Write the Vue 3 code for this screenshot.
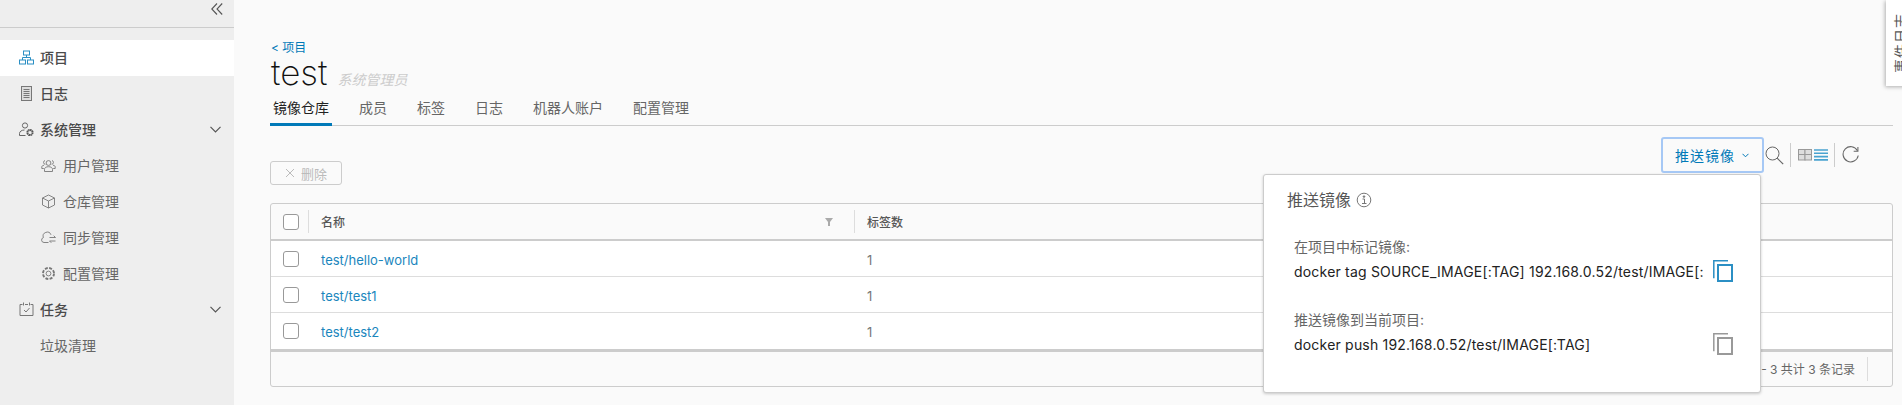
<script setup>
const subItems = [
  { label: '用户管理', icon: 'users' },
  { label: '仓库管理', icon: 'box' },
  { label: '同步管理', icon: 'cloud' },
  { label: '配置管理', icon: 'gear' },
]
const tabs = ['镜像仓库', '成员', '标签', '日志', '机器人账户', '配置管理']
const rows = ['test/hello-world', 'test/test1', 'test/test2']
</script>

<template>
  <div class="page">
    <aside class="side">
      <div class="collapse">
        <svg width="12" height="12" viewBox="0 0 12 12" fill="none" stroke="#555" stroke-width="1.100"><path d="M6 .5 .8 6 6 11.500M11.200 .5 6 6l5.200 5.500"/></svg>
      </div>
      <nav class="nav">
        <a class="item active">
          <svg class="ico" viewBox="0 0 15 15" fill="none" stroke="#2b8fc4" stroke-width="1"><rect x="4.500" y="1" width="6" height="4"/><rect x=".5" y="10" width="6" height="4"/><rect x="8.500" y="10" width="6" height="4"/><path d="M7.500 5v2.500M3.500 10V7.500h8V10"/></svg>
          <span class="top-label">项目</span>
        </a>
        <a class="item">
          <svg class="ico" viewBox="0 0 15 15" fill="none" stroke="#777" stroke-width="1"><rect x="2.500" y=".5" width="10" height="14" fill="#ddd"/><path d="M4.500 3.500h6M4.500 5.500h6M4.500 7.500h6M4.500 9.500h6M4.500 11.500h6"/></svg>
          <span class="top-label">日志</span>
        </a>
        <a class="item">
          <svg class="ico" viewBox="0 0 15 15" fill="none" stroke="#666" stroke-width="1"><circle cx="6" cy="3.500" r="2.600"/><path d="M.5 13.500v-2c0-2 2.200-3.500 5-3.500"/><path d="M.5 13.500h6"/><circle cx="11" cy="10.500" r="2.600" stroke-width="2" stroke="#555" stroke-dasharray="1.600 .4"/></svg>
          <span class="top-label">系统管理</span>
          <svg class="chev" width="11" height="7" viewBox="0 0 11 7" fill="none" stroke="#555" stroke-width="1.200"><path d="M.5 .8 5.500 5.800l5-5"/></svg>
        </a>
        <a v-for="s in subItems" :key="s.label" class="item sub">
          <svg class="ico sub-ico" viewBox="0 0 15 15" fill="none" stroke="#777" stroke-width=".9">
            <template v-if="s.icon === 'users'"><circle cx="7.500" cy="5" r="2.400"/><path d="M3.500 13.500v-2.200c0-1.600 1.600-2.600 4-2.600s4 1 4 2.600v2.200z"/><path d="M4.300 6.400A2 2 0 0 1 4 2.500M10.700 6.400A2 2 0 0 0 11 2.500M2.800 10.500H.8V9c0-1 .8-1.600 2.200-1.700M12.200 10.500h2V9c0-1-.8-1.600-2.200-1.700"/></template>
            <template v-else-if="s.icon === 'box'"><path d="M7.500 1 13.500 4v7l-6 3-6-3V4zM1.500 4l6 3 6-3M7.500 7v7"/></template>
            <template v-else-if="s.icon === 'cloud'"><path d="M7.500 12.500H3a2.500 2.500 0 0 1-.6-4.900A4 4 0 0 1 10 4.800"/><path d="M8.500 7.500h6m-1.800-1.800 1.800 1.800M14.500 11h-6m1.800 1.800L8.500 11"/></template>
            <template v-else><circle cx="7.500" cy="7.500" r="2.400"/><circle cx="7.500" cy="7.500" r="5.500" stroke-width="1.900" stroke-dasharray="2.900 1.420"/></template>
          </svg>
          <span>{{ s.label }}</span>
        </a>
        <a class="item">
          <svg class="ico" viewBox="0 0 15 15" fill="none" stroke="#777" stroke-width="1"><path d="M3.500 2.500H1v11h13v-11h-2.500M6 2.500h3M4.500 .5v3M10.500 .5v3"/><path d="m5 8 2 2 3.500-4"/></svg>
          <span class="top-label">任务</span>
          <svg class="chev" width="11" height="7" viewBox="0 0 11 7" fill="none" stroke="#555" stroke-width="1.200"><path d="M.5 .8 5.500 5.800l5-5"/></svg>
        </a>
        <a class="item leaf"><span>垃圾清理</span></a>
      </nav>
    </aside>

    <main class="main">
      <div class="crumb">&lt; 项目</div>
      <div class="title-row">
        <h1 class="title">test</h1>
        <span class="role">系统管理员</span>
      </div>
      <div class="tabs">
        <a v-for="(t, i) in tabs" :key="t" class="tab" :class="{ on: i === 0 }">{{ t }}</a>
      </div>

      <div class="toolbar">
        <button class="del">
          <svg width="10" height="10" viewBox="0 0 10 10" stroke="#bbb" stroke-width="1"><path d="m1 1 8 8M9 1 1 9"/></svg>
          删除
        </button>
        <div class="actions">
          <button class="push">推送镜像
            <svg width="7" height="5" viewBox="0 0 7 5" fill="none" stroke="#0079b8" stroke-width="1"><path d="m.5 .8 3 3 3-3"/></svg>
          </button>
          <svg class="search" width="19" height="19" viewBox="0 0 19 19" fill="none" stroke="#666" stroke-width="1"><circle cx="7.500" cy="7.500" r="6.500"/><path d="m12.200 12.200 6 6" stroke-width="1.200"/></svg>
          <span class="bar"></span>
          <svg class="view" width="30" height="12" viewBox="0 0 30 12">
            <g fill="#ddd" stroke="#999" stroke-width="1"><rect x=".5" y=".5" width="6.500" height="5"/><rect x="7" y=".5" width="6.500" height="5"/><rect x=".5" y="5.500" width="6.500" height="5.500"/><rect x="7" y="5.500" width="6.500" height="5.500"/></g>
            <path d="M16 1h14M16 4.300h14M16 7.600h14M16 10.900h14" stroke="#49a3d0" stroke-width="1.600"/>
          </svg>
          <span class="bar"></span>
          <svg class="refresh" width="17" height="18" viewBox="0 0 16 17" fill="none" stroke="#666" stroke-width="1"><path d="M14.600 4.500A7.200 7.200 0 1 0 15.300 9"/><path d="M15 1v4h-4"/></svg>
        </div>
      </div>

      <section class="table">
        <div class="row head">
          <div class="c-check"><span class="box"></span></div>
          <div class="c-name head-name">名称
            <svg class="filter" width="8" height="8" viewBox="0 0 8 8" fill="#aaa"><path d="M0 0h8L5 4v4H3V4z"/></svg>
          </div>
          <div class="c-rest">标签数</div>
        </div>
        <div v-for="r in rows" :key="r" class="row body">
          <div class="c-check plain"><span class="box"></span></div>
          <div class="c-name plain"><a class="link">{{ r }}</a></div>
          <div class="c-rest plain">1</div>
        </div>
        <div class="foot">
          <span>1 - 3 共计 3 条记录</span>
          <span class="foot-bar"></span>
        </div>
      </section>
    </main>

    <div class="pop">
      <div class="pop-title">推送镜像
        <svg width="16" height="16" viewBox="0 0 16 16" fill="none" stroke="#777" stroke-width="1"><circle cx="8" cy="8" r="6.800"/><path d="M6.500 7h2v4.500M6 11.500h4.500" /><circle cx="8" cy="4.600" r=".8" fill="#777"/></svg>
      </div>
      <div class="cmd first">
        <div class="cmd-label">在项目中标记镜像:</div>
        <div class="cmd-line"><span class="cmd-text">docker tag SOURCE_IMAGE[:TAG] 192.168.0.52/test/IMAGE[:TAG]</span>
          <svg class="copy" width="20" height="22" viewBox="0 0 20 22" fill="none" stroke="#2b8fc4"><path d="M15 .8H.8v17.500" stroke-width="1.500"/><rect x="5" y="5" width="14" height="16" stroke-width="2"/></svg>
        </div>
      </div>
      <div class="cmd second">
        <div class="cmd-label">推送镜像到当前项目:</div>
        <div class="cmd-line"><span class="cmd-text">docker push 192.168.0.52/test/IMAGE[:TAG]</span>
          <svg class="copy" width="20" height="22" viewBox="0 0 20 22" fill="none" stroke="#999"><path d="M15 .8H.8v17.500" stroke-width="1.500"/><rect x="5" y="5" width="14" height="16" stroke-width="2"/></svg>
        </div>
      </div>
    </div>

    <div class="event"><span class="event-text">事件日志</span></div>
  </div>
</template>

<style>
html, body { margin: 0; background: #fafafa; }
</style>

<style scoped>
.page {
  position: relative;
  display: flex;
  width: 1902px;
  height: 405px;
  overflow: hidden;
  background: #fafafa;
  color: #565656;
  font-family: "Inter", "Noto Sans CJK SC", sans-serif;
  font-size: 14px;
}
.side {
  flex: 0 0 234px;
  background: #eee;
}
.collapse {
  border-bottom: 1px solid #ccc;
  display: flex;
  justify-content: flex-end;
  padding: 3px 11px 0 0;
  box-sizing: border-box;
  height: 28px;
}
.nav { padding-top: 12px; }
.item {
  height: 36px;
  box-sizing: border-box;
  padding-bottom: 2px;
  display: flex;
  align-items: center;
  padding-left: 19px;
  color: #565656;
}
.item.active { background: #fff; }
.ico { width: 15px; height: 15px; margin-right: 6px; flex: none; }
.top-label { font-weight: 500; color: #4a4a4a; }
.chev { margin-left: auto; margin-right: 13px; }
.sub { padding-left: 41px; color: #666; }
.sub .sub-ico { margin-right: 7px; }
.leaf { padding-left: 40px; color: #666; }

.main {
  flex: 1;
  min-width: 0;
  padding: 38px 9px 0 36px;
}
.crumb {
  color: #0079b8;
  font-size: 12px;
  line-height: 18px;
  padding: 1px 0 0 1px;
  height: 17px;
}
.title-row {
  display: flex;
  align-items: baseline;
  margin-top: -2px;
  height: 36px;
  padding-left: 1px;
}
.title {
  margin: 0;
  font-size: 35px;
  line-height: 36px;
  font-weight: 200;
  color: #111;
}
.role {
  margin-left: 10px;
  font-size: 14px;
  font-style: italic;
  color: #ccc;
}
.tabs {
  height: 36px;
  box-sizing: border-box;
  display: flex;
  gap: 24px;
  border-bottom: 1px solid #ccc;
}
.tab {
  height: 36px;
  box-sizing: border-box;
  padding: 0 3px;
  line-height: 36px;
  color: #666;
}
.tab.on {
  color: #222;
  border-bottom: 3px solid #0079b8;
}
.toolbar {
  display: flex;
  justify-content: space-between;
  align-items: flex-start;
  margin-top: 11px;
  margin-bottom: 18px;
  height: 48px;
}
.del {
  margin-top: 24px;
  width: 72px;
  height: 24px;
  box-sizing: border-box;
  border: 1px solid #ccc;
  border-radius: 3px;
  background: transparent;
  color: #bbb;
  font: inherit;
  font-size: 13px;
  display: flex;
  align-items: center;
  justify-content: center;
  gap: 6px;
  padding: 0;
}
.actions {
  display: flex;
  align-items: center;
  height: 36px;
  padding-right: 34px;
}
.push {
  width: 103px;
  height: 36px;
  box-sizing: border-box;
  border: 2px solid #a6c8f5;
  border-radius: 3px;
  background: #fff0;
  color: #0079b8;
  font: inherit;
  letter-spacing: 1px;
  display: flex;
  align-items: center;
  gap: 7px;
  padding: 0 0 0 12px;
}
.search { margin: 0 -1px 0 1px; }
.bar { width: 1px; height: 24px; background: #ccc; margin: 0 7px; flex: none; }
.view { margin: 0 -1px 0 0; }
.refresh { margin-left: 0; }

.table {
  border: 1px solid #ccc;
  border-radius: 3px;
  height: 184px;
  box-sizing: border-box;
  background: #fafafa;
}
.row {
  display: grid;
  grid-template-columns: 38px 546px 1fr;
}
.row.head { height: 37px; box-sizing: border-box; border-bottom: 2px solid #ccc; font-size: 12px; }
.row.body { height: 36px; box-sizing: border-box; background: #fff; border-bottom: 1px solid #ddd; font-size: 13px; color: #777; }
.row.body:nth-of-type(4) { border-bottom: 0; }
.plain.c-name, .plain.c-rest { padding-top: 2px; }
.c-check { display: flex; align-items: center; padding-left: 12px; }
.head .c-check, .head .c-name { position: relative; }
.head .c-check::after, .head .c-name::after {
  content: "";
  position: absolute;
  right: 0;
  top: 6px;
  bottom: 6px;
  width: 1px;
  background: #ddd;
}
.c-name, .c-rest { padding-left: 12px; display: flex; align-items: center; }
.head-name { justify-content: space-between; padding-right: 22px; font-weight: 500; }
.head .c-rest { font-weight: 500; }
.box {
  width: 16px;
  height: 16px;
  box-sizing: border-box;
  border: 1px solid #999;
  border-radius: 3px;
  background: #fff;
}
.link { color: #1a86bd; }
.foot {
  height: 36px;
  box-sizing: border-box;
  border-top: 3px solid #ccc;
  display: flex;
  align-items: center;
  justify-content: flex-end;
  font-size: 12px;
  color: #666;
  padding-right: 24px;
  gap: 12px;
}
.foot-bar { width: 1px; height: 24px; background: #ddd; }

.pop {
  position: absolute;
  left: 1263px;
  top: 174px;
  width: 498px;
  height: 219px;
  box-sizing: border-box;
  background: #fff;
  border: 1px solid #ccc;
  border-radius: 3px;
  box-shadow: 0 1px 3px rgba(0,0,0,.2);
  padding: 14px 0 0 23px;
}
.pop-title {
  font-size: 16px;
  line-height: 22px;
  color: #565656;
  display: flex;
  align-items: center;
  gap: 5px;
}
.cmd { padding-left: 7px; width: 439px; }
.cmd.first { margin-top: 26px; }
.cmd.second { margin-top: 25px; }
.cmd-label { line-height: 20px; color: #666; }
.cmd-line {
  display: flex;
  justify-content: space-between;
  align-items: center;
  height: 28px;
  color: #222;
}
.cmd-text {
  display: block;
  width: 409px;
  overflow: hidden;
  white-space: nowrap;
  letter-spacing: .2px;
}
.copy { flex: none; }

.event {
  position: absolute;
  left: 1886px;
  top: 0;
  width: 30px;
  height: 86px;
  box-sizing: border-box;
  background: #fff;
  box-shadow: -1px 1px 4px rgba(0,0,0,.3);
  padding-left: 7px;
  display: flex;
  align-items: center;
  color: #565656;
}
.event-text {
  writing-mode: vertical-rl;
  text-orientation: sideways;
  transform: rotate(180deg);
  font-size: 14px;
  line-height: 16px;
  letter-spacing: 1px;
  white-space: nowrap;
}
</style>
